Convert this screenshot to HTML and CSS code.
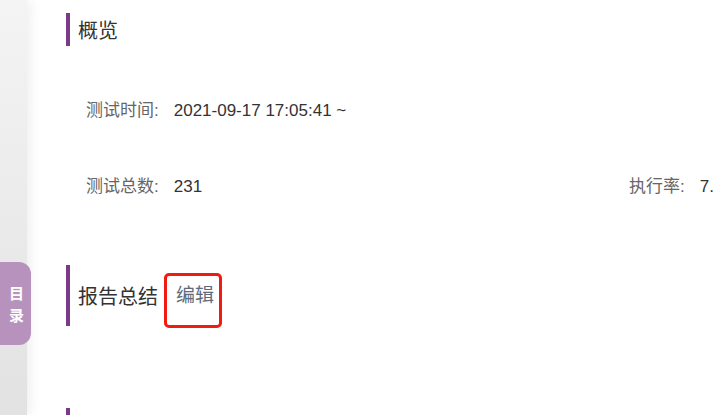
FILE: index.html
```html
<!DOCTYPE html>
<html lang="zh-CN">
<head>
<meta charset="utf-8">
<title>报告</title>
<link rel="stylesheet" href="styles.css">
</head>
<body>
<div class="page">
  <aside class="sidebar"></aside>
  <a class="toc-tab"><span>目</span><span>录</span></a>
  <main class="main">
    <section class="section">
      <h2 class="section-title">概览</h2>
      <div class="info-grid">
        <div class="info-item"><span class="info-label">测试时间:</span><span class="info-value">2021-09-17 17:05:41 ~</span></div>
        <div class="info-item"></div>
        <div class="info-item"><span class="info-label">测试总数:</span><span class="info-value">231</span></div>
        <div class="info-item"><span class="info-label">执行率:</span><span class="info-value">7.</span></div>
      </div>
    </section>
    <section class="section summary">
      <h2 class="section-title">报告总结<span class="edit-box"><a class="edit-link">编辑</a></span></h2>
    </section>
    <section class="section next">
      <h2 class="section-title"></h2>
    </section>
  </main>
</div>
</body>
</html>
```
FILE: styles.css
```css
html, body {
  margin: 0;
  padding: 0;
  background: #fff;
}
body {
  font-family: "Liberation Sans", "Noto Sans CJK SC", sans-serif;
  color: #333;
}
.page {
  display: flex;
  width: 715px;
  height: 415px;
  overflow: hidden;
  position: relative;
}
.sidebar {
  width: 27px;
  flex: none;
  background: linear-gradient(to bottom, #f4f4f4, #e2e2e2);
  box-shadow: 3px 0 12px rgba(0, 0, 0, 0.07);
  position: relative;
  z-index: 1;
}
.toc-tab {
  position: absolute;
  left: 0;
  top: 262px;
  width: 31px;
  height: 83px;
  background: #b692bd;
  border-radius: 0 12px 12px 0;
  z-index: 2;
  display: flex;
  flex-direction: column;
  align-items: center;
  justify-content: center;
  gap: 5px;
  color: #fff;
  font-size: 15px;
  font-weight: bold;
  line-height: 17px;
  padding-left: 2px;
  padding-top: 1px;
  box-sizing: border-box;
}
.main {
  flex: 1;
  padding-left: 39px;
  padding-top: 13px;
}
.section-title {
  margin: 0;
  border-left: 4px solid #7b3a88;
  padding-left: 8px;
  font-size: 20px;
  font-weight: normal;
  color: #333;
  display: flex;
  align-items: center;
  height: 33px;
}
.info-grid {
  display: grid;
  grid-template-columns: 543px 1fr;
  grid-auto-rows: 76px;
  margin-top: 24px;
  padding-left: 20px;
}
.info-item {
  display: flex;
  align-items: baseline;
  align-self: center;
  font-size: 17px;
  white-space: nowrap;
}
.info-label {
  color: #666;
  margin-right: 15px;
}
.info-value {
  color: #333;
  font-size: 17px;
}
.summary {
  margin-top: 43px;
}
.summary .section-title {
  height: 61px;
}
.edit-box {
  display: inline-flex;
  align-items: flex-start;
  margin-left: 6px;
  margin-top: 10px;
  height: 45px;
  padding: 4px 5px 0 9px;
  border: 3px solid #f01b12;
  border-radius: 5px;
}
.edit-link {
  font-size: 19px;
  color: #5f6b7a;
}
.next {
  margin-top: 82px;
}
```
